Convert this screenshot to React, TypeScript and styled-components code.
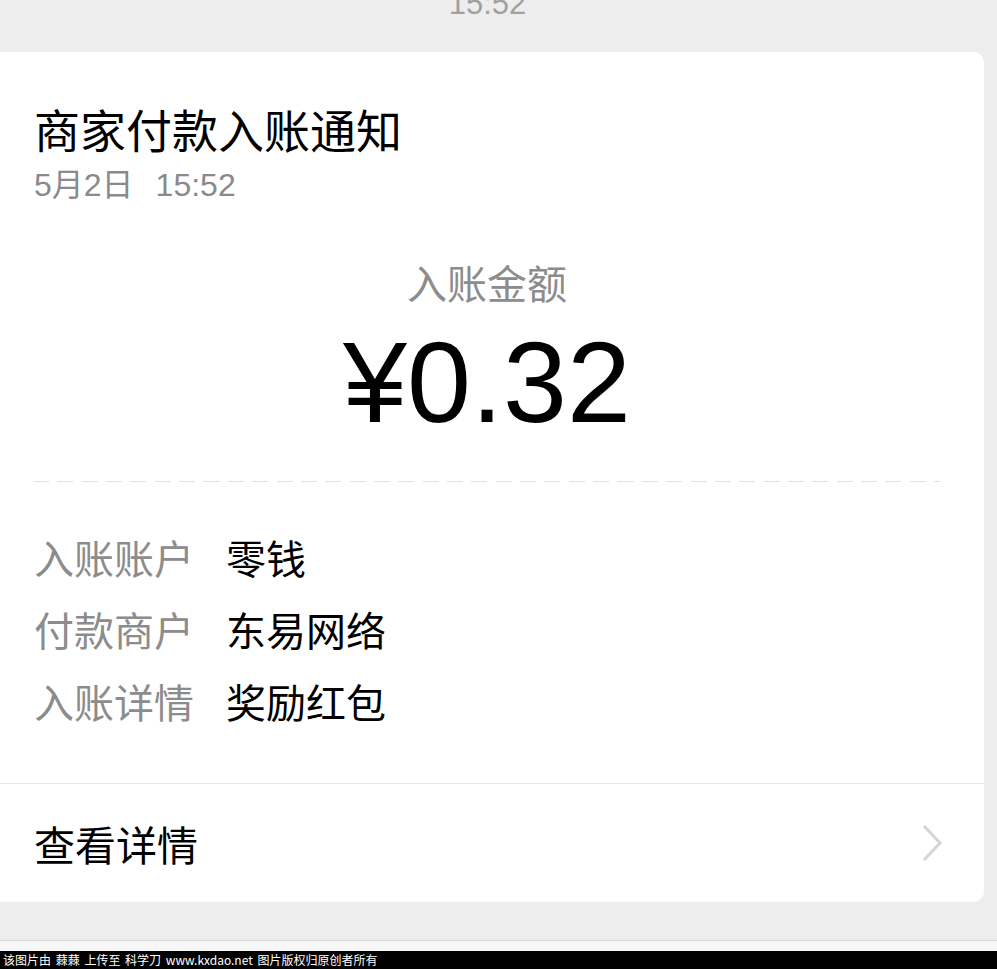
import React from "react";
import styled, { createGlobalStyle } from "styled-components";

const CJK = `"Noto Sans CJK SC", "Noto Sans", sans-serif`;
const LATIN = `"Liberation Sans", "Noto Sans CJK SC", sans-serif`;

const GlobalStyle = createGlobalStyle`
  html, body {
    margin: 0;
    padding: 0;
    background: #ededed;
    overflow: hidden;
  }
  body {
    font-family: ${CJK};
  }
`;

const Screen = styled.div`
  display: flex;
  flex-direction: column;
  height: 100vh;
`;

const TimeBar = styled.div`
  height: 52px;
  overflow: hidden;
  display: flex;
  justify-content: center;
`;

const TimeText = styled.div`
  margin-top: -12px;
  margin-left: -22px;
  font-family: ${LATIN};
  font-size: 31px;
  line-height: 31px;
  color: #a0a0a0;
`;

const Card = styled.div`
  margin-left: -10px;
  width: 994px;
  background: #ffffff;
  border-radius: 10px;
  overflow: hidden;
`;

const CardBody = styled.div`
  padding: 48px 44px 46px 44px;
  display: flex;
  flex-direction: column;
`;

const Title = styled.div`
  font-size: 46px;
  line-height: 56px;
  color: #000;
`;

const DateLine = styled.div`
  margin-top: 9px;
  font-family: ${LATIN};
  font-size: 32px;
  line-height: 40px;
  color: #8a8a8a;
`;

const DateTime = styled.span`
  margin-left: 22px;
`;

const AmountLabel = styled.div`
  margin-top: 52px;
  text-align: center;
  font-size: 40px;
  line-height: 50px;
  color: #8c8c8c;
`;

const Amount = styled.div`
  margin-top: 19px;
  text-align: center;
  font-family: ${LATIN};
  font-size: 115px;
  line-height: 112px;
  color: #000;
`;

const Dashed = styled.div`
  margin-top: 43px;
  height: 0;
  border-top: 1.5px dashed #dedede;
  border-image: repeating-linear-gradient(
      to right,
      #e2e2e2 0 16px,
      transparent 16px 24.3px
    )
    1;
`;

const Rows = styled.div`
  margin-top: 39px;
  display: grid;
  grid-template-columns: 192px auto;
`;

const RowLabel = styled.div`
  font-size: 40px;
  line-height: 72px;
  color: #8c8c8c;
`;

const RowValue = styled.div`
  font-size: 40px;
  line-height: 72px;
  color: #000;
`;

const LinkRow = styled.div`
  border-top: 1px solid #e6e6e6;
  height: 118px;
  padding: 0 41px 0 44px;
  display: flex;
  align-items: center;
  justify-content: space-between;
`;

const LinkText = styled.div`
  font-size: 41px;
  line-height: 50px;
  color: #000;
`;

const Spacer = styled.div`
  flex: 1;
`;

const InputBar = styled.div`
  height: 10px;
  background: #f7f7f7;
  border-top: 1px solid #d9d9d9;
`;

const Watermark = styled.div`
  height: 18px;
  background: #000;
  color: #fff;
  font-size: 12px;
  line-height: 18px;
  padding-left: 3px;
  white-space: pre;
  word-spacing: 2px;
`;

const Chevron = () => (
  <svg width="22" height="38" viewBox="0 0 22 38" fill="none">
    <polyline
      points="3,2 19,19 3,36"
      stroke="#d5d5d5"
      strokeWidth="3"
      strokeLinejoin="miter"
    />
  </svg>
);

const rows: [string, string][] = [
  ["入账账户", "零钱"],
  ["付款商户", "东易网络"],
  ["入账详情", "奖励红包"],
];

export default function App() {
  return (
    <Screen>
      <GlobalStyle />
      <TimeBar>
        <TimeText>15:52</TimeText>
      </TimeBar>
      <Card>
        <CardBody>
          <Title>商家付款入账通知</Title>
          <DateLine>
            5月2日<DateTime>15:52</DateTime>
          </DateLine>
          <AmountLabel>入账金额</AmountLabel>
          <Amount>¥0.32</Amount>
          <Dashed />
          <Rows>
            {rows.map(([label, value]) => (
              <React.Fragment key={label}>
                <RowLabel>{label}</RowLabel>
                <RowValue>{value}</RowValue>
              </React.Fragment>
            ))}
          </Rows>
        </CardBody>
        <LinkRow>
          <LinkText>查看详情</LinkText>
          <Chevron />
        </LinkRow>
      </Card>
      <Spacer />
      <InputBar />
      <Watermark>该图片由 蕀蕀 上传至 科学刀 www.kxdao.net 图片版权归原创者所有</Watermark>
    </Screen>
  );
}
